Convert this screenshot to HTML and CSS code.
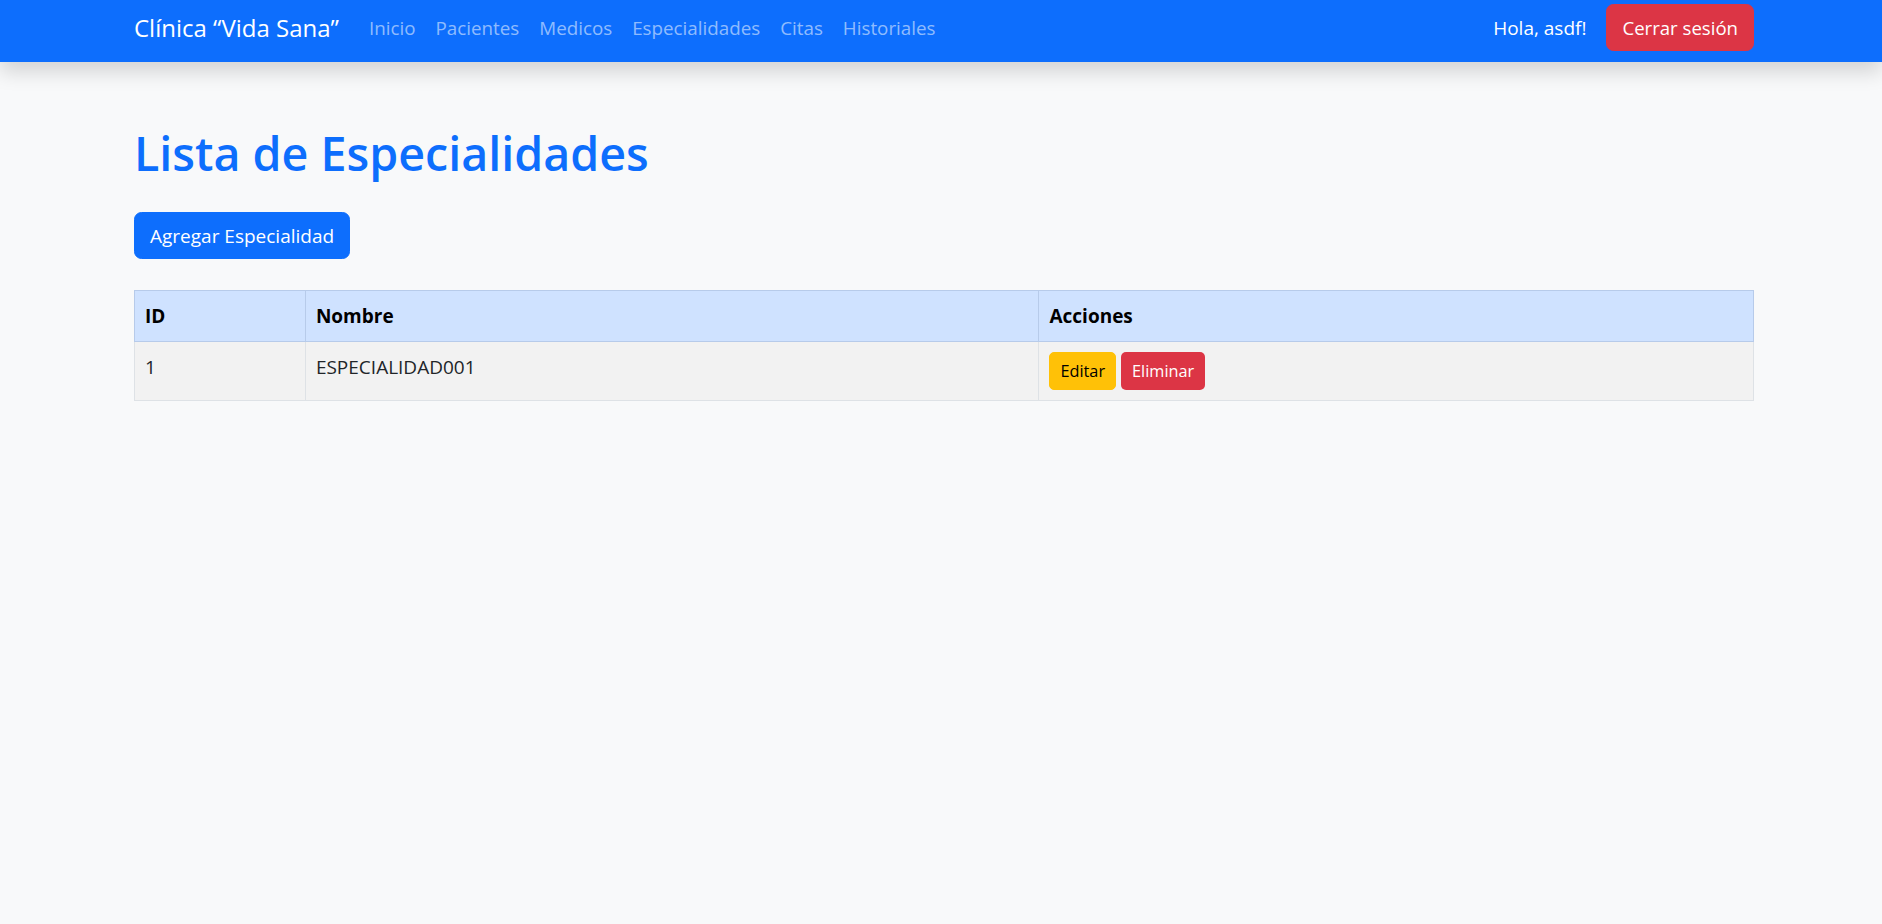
FILE: index.html
```html
<!DOCTYPE html>
<html lang="es">
<head>
<meta charset="utf-8">
<title>Especialidades</title>
<link rel="stylesheet" href="styles.css">
</head>
<body>
<nav class="navbar">
  <div class="container nav-inner">
    <a class="brand" href="#">Clínica “Vida Sana”</a>
    <ul class="nav">
      <li><a class="nav-link" href="#">Inicio</a></li>
      <li><a class="nav-link" href="#">Pacientes</a></li>
      <li><a class="nav-link" href="#">Medicos</a></li>
      <li><a class="nav-link" href="#">Especialidades</a></li>
      <li><a class="nav-link" href="#">Citas</a></li>
      <li><a class="nav-link" href="#">Historiales</a></li>
    </ul>
    <div class="nav-right">
      <span class="greet">Hola, asdf!</span>
      <button class="btn btn-danger btn-logout">Cerrar sesión</button>
    </div>
  </div>
</nav>
<main class="container main">
  <h1 class="title">Lista de Especialidades</h1>
  <div class="toolbar">
    <button class="btn btn-primary">Agregar Especialidad</button>
  </div>
  <table class="table">
    <thead>
      <tr>
        <th class="col-id">ID</th>
        <th class="col-name">Nombre</th>
        <th class="col-act">Acciones</th>
      </tr>
    </thead>
    <tbody>
      <tr>
        <td>1</td>
        <td>ESPECIALIDAD001</td>
        <td>
          <div class="row-actions">
            <button class="btn-sm btn-warning">Editar</button>
            <button class="btn-sm btn-danger">Eliminar</button>
          </div>
        </td>
      </tr>
    </tbody>
  </table>
</main>
</body>
</html>
```
FILE: styles.css
```css
* { box-sizing: border-box; }

html, body {
  margin: 0;
  padding: 0;
}

body {
  background: #f8f9fa;
  font-family: "Segoe UI", "Open Sans", "Noto Sans", sans-serif;
  font-size: 19px;
  line-height: 30px;
  color: #212529;
}

.container {
  width: 1620px;
  margin-left: 134px;
  margin-right: 128px;
}

/* Navbar */
.navbar {
  height: 62px;
  padding-top: 4px;
  background: #0d6efd;
  box-shadow: 0 10px 20px rgba(0, 0, 0, 0.15);
  position: relative;
  z-index: 1;
}

.nav-inner {
  display: flex;
  align-items: center;
  height: 47px;
}

.brand {
  color: #fff;
  text-decoration: none;
  font-size: 24px;
  line-height: 37px;
  margin-right: 20px;
}

.nav {
  display: flex;
  list-style: none;
  margin: 0;
  padding: 0;
}

.nav-link {
  display: block;
  padding: 0 10px;
  color: rgba(255, 255, 255, 0.55);
  text-decoration: none;
  font-size: 18.8px;
  line-height: 30px;
}

.nav-right {
  margin-left: auto;
  display: flex;
  align-items: center;
}

.greet {
  color: #fff;
  margin-right: 20px;
}

/* Buttons */
.btn {
  font-family: inherit;
  font-size: 19px;
  line-height: 30px;
  padding: 7.5px 15px;
  border: 1px solid transparent;
  border-radius: 7.5px;
  color: #fff;
  cursor: pointer;
}

.btn-logout {
  font-size: 18.6px;
}

.btn-primary {
  background: #0d6efd;
  border-color: #0d6efd;
}

.btn-danger {
  background: #dc3545;
  border-color: #dc3545;
  color: #fff;
}

.btn-sm {
  font-family: inherit;
  font-size: 16.3px;
  line-height: 26px;
  padding: 5px 10px;
  border: 1px solid transparent;
  border-radius: 5px;
  cursor: pointer;
}

.btn-warning {
  background: #ffc107;
  border-color: #ffc107;
  color: #000;
}

/* Main */
.main {
  padding-top: 61px;
}

.title {
  margin: 0 0 29px;
  font-size: 46.6px;
  line-height: 60px;
  font-weight: 600;
  color: #0d6efd;
}

.toolbar {
  margin-bottom: 31px;
}

.toolbar .btn {
  display: block;
}

/* Table */
.table {
  width: 1620px;
  border-collapse: collapse;
  vertical-align: top;
}

.table th,
.table td {
  padding: 10px 10px;
  text-align: left;
  vertical-align: top;
  line-height: 30px;
}

.table thead th {
  background: #cfe2ff;
  color: #000;
  font-weight: 700;
  border: 1px solid #b7cbea;
}

.table tbody td {
  background: #f2f2f2;
  border: 1px solid #dee2e6;
}

.col-id { width: 171px; }
.col-name { width: 734px; }
.col-act { width: 715px; }

.row-actions {
  display: flex;
  gap: 5px;
}
```
